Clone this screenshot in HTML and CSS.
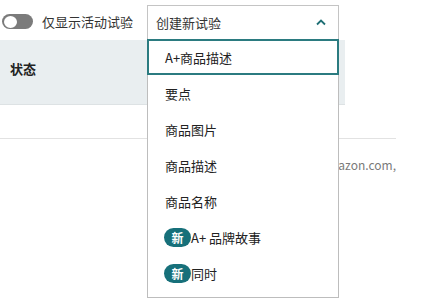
FILE: index.html
```html
<!DOCTYPE html>
<html lang="zh">
<head>
  <meta charset="UTF-8" />
  <title>试验</title>
  <link rel="stylesheet" href="styles.css">
</head>
<body>
  <div class="pagina">
    <!-- barra superior -->
    <div class="barra">
      <span class="interruptor"><span class="bola"></span></span>
      <span class="etiqueta">仅显示活动试验</span>
    </div>

    <div class="tabla">
      <div class="cabecera"><span>状态</span></div>
      <div class="fila"></div>
      <div class="fila-texto"><span class="url">www.amazon.com,</span></div>
    </div>

    <!-- menu desplegable -->
    <div class="desplegable">
      <div class="boton">
        <span>创建新试验</span>
        <svg class="chevron" width="12" height="8" viewBox="0 0 12 8">
          <path d="M2 6.5 L6 2.5 L10 6.5" fill="none" stroke="#1f6f75" stroke-width="1.8"/>
        </svg>
      </div>
      <ul class="opciones">
        <li class="activa">A+商品描述</li>
        <li>要点</li>
        <li>商品图片</li>
        <li>商品描述</li>
        <li>商品名称</li>
        <li><span class="nuevo">新</span>A+ 品牌故事</li>
        <li><span class="nuevo">新</span>同时</li>
      </ul>
    </div>
  </div>
</body>
</html>
```

FILE: styles.css
```css
body {
  margin: 0;
  background: #fff;
  font-family: "Noto Sans CJK SC", "Noto Sans", sans-serif;
  font-size: 13px;
  color: #222;
}

.pagina {
  position: relative;
  width: 426px;
  height: 301px;
  overflow: hidden;
}

.barra {
  display: flex;
  align-items: center;
  height: 40px;
  padding-left: 2px;
  padding-top: 3px;
  box-sizing: border-box;
}

.interruptor {
  display: flex;
  align-items: center;
  width: 31px;
  height: 15px;
  border-radius: 8px;
  background: #7b7b7b;
  padding-left: 2px;
  box-sizing: border-box;
}

.bola {
  width: 13px;
  height: 12px;
  border-radius: 50%;
  background: #fff;
}

.etiqueta {
  margin-left: 9px;
  color: #333;
}

.tabla {
  width: 396px;
}

.cabecera {
  display: flex;
  align-items: center;
  width: 345px;
  height: 65px;
  padding-left: 10px;
  padding-bottom: 8px;
  box-sizing: border-box;
  background: #e9eef0;
  border-bottom: 1px solid #dde2e4;
  font-weight: bold;
}

.fila {
  height: 33px;
  border-bottom: 1px solid #e2e2e2;
}

.fila-texto {
  display: flex;
  justify-content: flex-end;
  padding-top: 17px;
  overflow: hidden;
}

.url {
  color: #7a7a7a;
  white-space: nowrap;
  font-size: 12px;
}

.desplegable {
  position: absolute;
  left: 147px;
  top: 5px;
  width: 192px;
}

.boton {
  display: flex;
  align-items: center;
  justify-content: space-between;
  height: 33px;
  padding: 0 11px 0 8px;
  border: 1px solid #c4c4c4;
  border-bottom: none;
  box-sizing: border-box;
  background: #fff;
  color: #333;
}

.opciones {
  list-style: none;
  margin: 0;
  padding: 1px 0 6px;
  border: 1px solid #bdbdbd;
  border-top: none;
  background: #fff;
}

.opciones li {
  display: flex;
  align-items: center;
  height: 36px;
  padding-left: 17px;
  box-sizing: border-box;
  color: #222;
}

.opciones li.activa {
  margin: 0 -1px;
  padding-left: 16px;
  border: 2px solid #2b7b80;
}

.nuevo {
  display: inline-flex;
  align-items: center;
  justify-content: center;
  width: 27px;
  height: 19px;
  margin-left: -1px;
  border-radius: 10px;
  background: #17707a;
  color: #fff;
  font-weight: bold;
  font-size: 12px;
}
```
